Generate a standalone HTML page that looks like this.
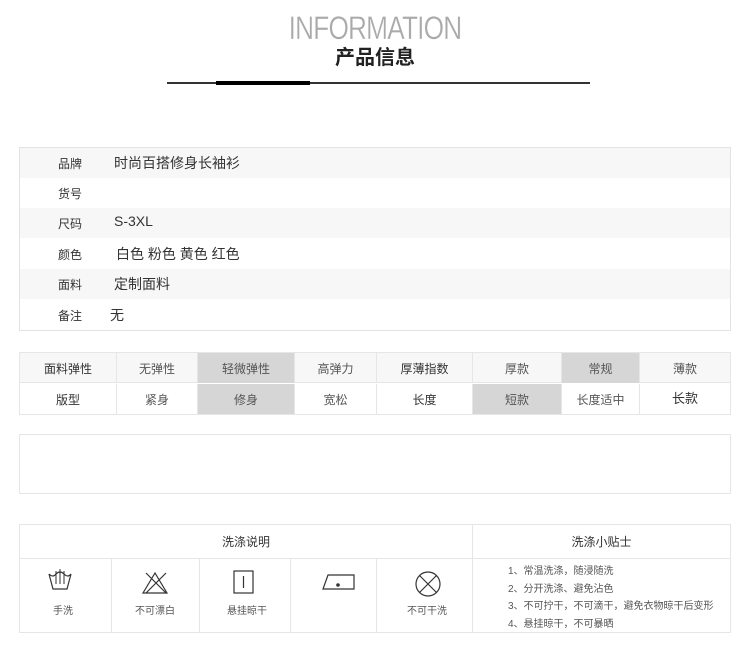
<!DOCTYPE html>
<html><head><meta charset="utf-8"><style>
*{margin:0;padding:0;box-sizing:border-box}
body{width:750px;height:655px;background:#fff;font-family:"Liberation Sans","Noto Sans CJK SC",sans-serif;color:#333;position:relative;overflow:hidden}
.a{position:absolute}
.t1 div.r{position:absolute;left:0;width:710px;height:30px}
.lab{position:absolute;left:38px;font-size:12px;top:7px;color:#333}
.val{position:absolute;left:94px;font-size:14px;top:5px;color:#333}
.c{position:absolute;display:flex;align-items:center;justify-content:center;font-size:12px;color:#555;border-right:1px solid #e6e6e6}
</style></head><body>
<div class="a" style="left:0;width:750px;top:10px;text-align:center;font-size:32px;color:#aaa;letter-spacing:-1px;transform:scaleX(0.82);-webkit-text-stroke:0.3px #fff">INFORMATION</div>
<div class="a" style="left:0;width:750px;top:41px;text-align:center;font-size:20px;font-weight:bold;color:#222">产品信息</div>
<div class="a" style="left:167px;top:82px;width:423px;height:2px;background:#333"></div>
<div class="a" style="left:216px;top:81px;width:94px;height:4px;background:#000"></div>

<div class="a t1" style="left:19px;top:147px;width:712px;height:184px;border:1px solid #e3e3e3">
<div class="r" style="top:0;background:#f7f7f7"><span class="lab">品牌</span><span class="val">时尚百搭修身长袖衫</span></div>
<div class="r" style="top:30px"><span class="lab">货号</span></div>
<div class="r" style="top:60px;background:#f7f7f7"><span class="lab">尺码</span><span class="val">S-3XL</span></div>
<div class="r" style="top:91px"><span class="lab">颜色</span><span class="val" style="left:96px">白色 粉色 黄色 红色</span></div>
<div class="r" style="top:121px;background:#f7f7f7"><span class="lab">面料</span><span class="val">定制面料</span></div>
<div class="r" style="top:152px"><span class="lab">备注</span><span class="val" style="left:90px">无</span></div>
</div>

<div class="a" style="left:19px;top:352px;width:712px;height:63px;border:1px solid #e6e6e6;background:#fff">
<div class="a" style="left:0;top:0;width:710px;height:30px;background:#f7f7f7;border-bottom:1px solid #e6e6e6"></div>
<div class="c" style="left:0;top:0;width:97px;height:30px;color:#333">面料弹性</div>
<div class="c" style="left:97px;top:0;width:81px;height:30px">无弹性</div>
<div class="c" style="left:178px;top:0;width:97px;height:30px;background:#d6d6d6">轻微弹性</div>
<div class="c" style="left:275px;top:0;width:82px;height:30px">高弹力</div>
<div class="c" style="left:357px;top:0;width:96px;height:30px;color:#333">厚薄指数</div>
<div class="c" style="left:453px;top:0;width:89px;height:30px">厚款</div>
<div class="c" style="left:542px;top:0;width:78px;height:30px;background:#d6d6d6">常规</div>
<div class="c" style="left:620px;top:0;width:90px;height:30px;border:0">薄款</div>
<div class="c" style="left:0;top:31px;width:97px;height:30px;color:#333">版型</div>
<div class="c" style="left:97px;top:31px;width:81px;height:30px">紧身</div>
<div class="c" style="left:178px;top:31px;width:97px;height:30px;background:#d6d6d6">修身</div>
<div class="c" style="left:275px;top:31px;width:82px;height:30px">宽松</div>
<div class="c" style="left:357px;top:31px;width:96px;height:30px;color:#333">长度</div>
<div class="c" style="left:453px;top:31px;width:89px;height:30px;background:#d6d6d6">短款</div>
<div class="c" style="left:542px;top:31px;width:78px;height:30px">长度适中</div>
<div class="c" style="left:620px;top:29px;width:90px;height:30px;border:0;color:#333;font-size:13px">长款</div>
</div>

<div class="a" style="left:19px;top:434px;width:712px;height:60px;border:1px solid #e6e6e6"></div>

<div class="a" style="left:19px;top:524px;width:712px;height:109px;border:1px solid #e6e6e6">
<div class="c" style="left:0;top:0;width:453px;height:34px;color:#333;border-bottom:1px solid #e6e6e6">洗涤说明</div>
<div class="c" style="left:453px;top:0;width:257px;height:34px;color:#333;border:0;border-bottom:1px solid #e6e6e6">洗涤小贴士</div>
<div class="c" style="left:0;top:34px;width:92px;height:73px"></div>
<div class="c" style="left:92px;top:34px;width:88px;height:73px"></div>
<div class="c" style="left:180px;top:34px;width:91px;height:73px"></div>
<div class="c" style="left:271px;top:34px;width:86px;height:73px"></div>
<div class="c" style="left:357px;top:34px;width:96px;height:73px"></div>
<svg class="a" style="left:0;top:34px" width="453" height="73" fill="none" stroke="#333" stroke-width="1.2">
<path d="M29 15 L33 30 H47 L51 15 M29 15 Q33 19 36 15 Q40 11 44 15 Q48 19 51 15"/><path d="M36 12 V25 M40 10 V25 M44 12 V25" stroke-width="1"/>
<path d="M135 14 L123 34 H147 Z M126 14 L146 34 M146 14 L126 34"/>
<rect x="214" y="12" width="19" height="22"/><path d="M223.5 17 V29"/>
<path d="M308 16 H334 V30 H303 Z"/><circle cx="318" cy="26" r="1.2" fill="#333"/>
<circle cx="408" cy="25" r="12"/><path d="M399.5 16.5 L416.5 33.5 M416.5 16.5 L399.5 33.5"/>
<g fill="#555" stroke="none" font-size="10"><text x="33" y="55">手洗</text><text x="115" y="55">不可漂白</text><text x="207" y="55">悬挂晾干</text><text x="387" y="55">不可干洗</text></g>
</svg>
<div class="a" style="left:488px;top:38px;font-size:10px;line-height:17.5px;color:#555">1、常温洗涤，随浸随洗<br>2、分开洗涤、避免沾色<br>3、不可拧干，不可滴干，避免衣物晾干后变形<br>4、悬挂晾干，不可暴晒</div>
</div>
</body></html>
